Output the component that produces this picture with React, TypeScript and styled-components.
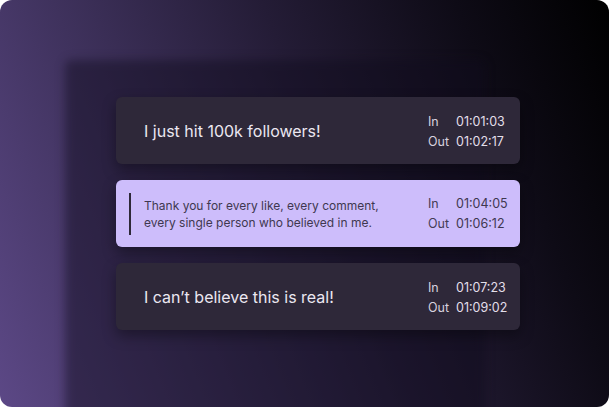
import React from "react";
import styled, { createGlobalStyle } from "styled-components";

const Global = createGlobalStyle`
  html, body { margin: 0; padding: 0; background: #ffffff; }
  body { font-family: Inter, "Noto Sans", sans-serif; -webkit-font-smoothing: antialiased; }
`;

const Frame = styled.div`
  width: 609px;
  height: 407px;
  border-radius: 12px;
  overflow: hidden;
  background: linear-gradient(68deg, #5c4886 0%, #3f325d 28%, #241c36 55%, #0e0b16 80%, #000000 100%);
  padding: 60px 0 0 65px;
  box-sizing: border-box;
  display: flex;
  align-items: flex-start;
`;

const Panel = styled.div`
  position: relative;
  width: 420px;
  height: 400px;
  padding: 37px 0 0 51px;
  box-sizing: border-box;
  display: flex;
  flex-direction: column;
  gap: 16px;
  &::before {
    content: "";
    position: absolute;
    inset: 0;
    background: rgba(16, 12, 28, 0.45);
    filter: blur(5px);
    border-radius: 6px;
  }
`;

const Card = styled.div<{ $active?: boolean }>`
  position: relative;
  width: 404px;
  height: 67px;
  box-sizing: border-box;
  border-radius: 6px;
  background: ${(p) => (p.$active ? "#cdbdfb" : "#2e2839")};
  box-shadow: 0 6px 14px rgba(0, 0, 0, 0.35);
  display: flex;
  align-items: center;
  padding: 0 0 0 28px;
`;

const Title = styled.div`
  flex: 1;
  font-size: 16px;
  color: #ebe7f1;
`;

const Quote = styled.div`
  flex: 1;
  position: relative;
  font-size: 12px;
  line-height: 17px;
  color: #3f3850;
  &::before {
    content: "";
    position: absolute;
    left: -15px;
    top: -4px;
    bottom: -4px;
    width: 2px;
    background: #2e2838;
  }
`;

const Times = styled.div<{ $dark?: boolean; $shift: number }>`
  width: 92px;
  display: grid;
  grid-template-columns: 28px 1fr;
  font-size: 12.5px;
  line-height: 20px;
  padding-top: ${(p) => p.$shift}px;
  color: ${(p) => (p.$dark ? "#3f3850" : "#e3dfea")};
`;

const Label = styled.span<{ $dark?: boolean }>`
  color: ${(p) => (p.$dark ? "#443c56" : "#d6d1df")};
`;

const Time = styled.span``;

type Item = { text: string; inT: string; outT: string; active?: boolean };

const items: Item[] = [
  { text: "I just hit 100k followers!", inT: "01:01:03", outT: "01:02:17" },
  {
    text: "Thank you for every like, every comment,\nevery single person who believed in me.",
    inT: "01:04:05",
    outT: "01:06:12",
    active: true,
  },
  { text: "I can\u2019t believe this is real!", inT: "01:07:23", outT: "01:09:02" },
];

export default function App() {
  return (
    <>
      <Global />
      <Frame>
        <Panel>
          {items.map((it, i) => (
            <Card key={i} $active={it.active}>
              {it.active ? (
                <Quote>
                  {it.text.split("\n").map((l, j) => (
                    <div key={j}>{l}</div>
                  ))}
                </Quote>
              ) : (
                <Title>{it.text}</Title>
              )}
              <Times $dark={it.active} $shift={it.active ? 0 : 3}>
                <Label $dark={it.active}>In</Label>
                <Time>{it.inT}</Time>
                <Label $dark={it.active}>Out</Label>
                <Time>{it.outT}</Time>
              </Times>
            </Card>
          ))}
        </Panel>
      </Frame>
    </>
  );
}
